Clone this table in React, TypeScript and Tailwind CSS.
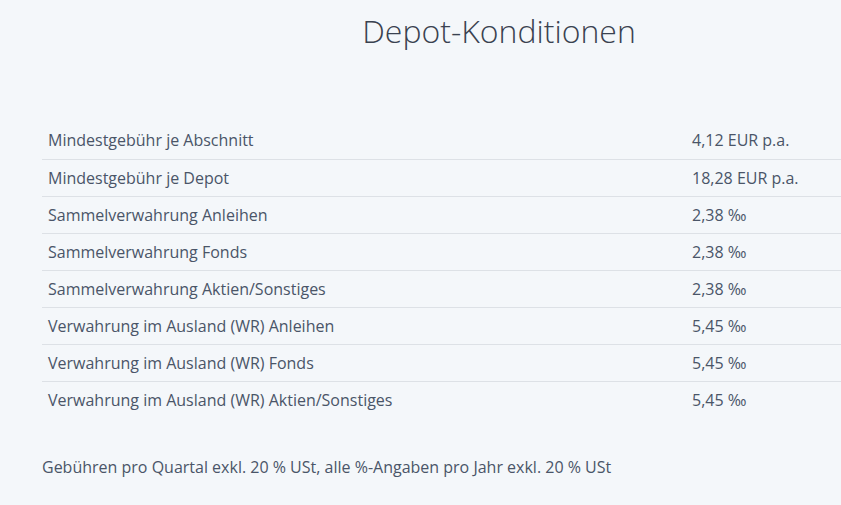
import React from 'react';

const rows: [string, string][] = [
  ['Mindestgebühr je Abschnitt', '4,12 EUR p.a.'],
  ['Mindestgebühr je Depot', '18,28 EUR p.a.'],
  ['Sammelverwahrung Anleihen', '2,38 ‰'],
  ['Sammelverwahrung Fonds', '2,38 ‰'],
  ['Sammelverwahrung Aktien/Sonstiges', '2,38 ‰'],
  ['Verwahrung im Ausland (WR) Anleihen', '5,45 ‰'],
  ['Verwahrung im Ausland (WR) Fonds', '5,45 ‰'],
  ['Verwahrung im Ausland (WR) Aktien/Sonstiges', '5,45 ‰'],
];

const App: React.FC = () => {
  return (
    <div
      className="min-h-[505px] w-full overflow-hidden bg-[#f4f7fa] text-[#4a5568]"
      style={{ fontFamily: '"Open Sans", "DejaVu Sans", sans-serif' }}
    >
      <div className="ml-[42px] w-[914px]">
        {/* Header */}
        <h1 className="pt-[10px] text-center text-[32px] font-light leading-[42px] text-[#3a4250]">
          Depot-Konditionen
        </h1>

        {/* Conditions */}
        <table className="mt-[70px] w-full border-collapse text-[16px]">
          <tbody>
            {rows.map(([label, value], i) => (
              <tr key={label} className={i < rows.length - 1 ? 'border-b border-[#dde1e6]' : ''}>
                <td className="h-[37px] w-[644px] px-[6px] pt-[1px] pb-0 leading-[21px]">{label}</td>
                <td className="h-[37px] px-[6px] pt-[1px] pb-0 leading-[21px]">{value}</td>
              </tr>
            ))}
          </tbody>
        </table>

        <p className="mt-[37px] text-[16px] leading-[24px]">
          Gebühren pro Quartal exkl. 20 % USt, alle %-Angaben pro Jahr exkl. 20 % USt
        </p>
      </div>
    </div>
  );
};

export default App;
